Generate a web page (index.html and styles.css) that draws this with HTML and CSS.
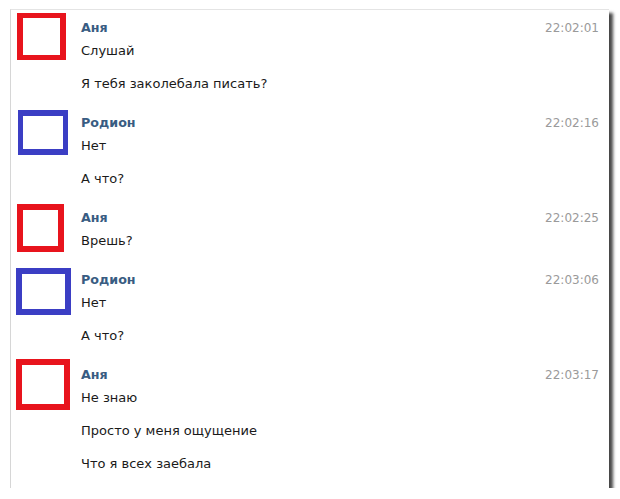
FILE: index.html
```html
<!DOCTYPE html>
<html lang="ru">
<head>
<meta charset="utf-8">
<title>Диалог</title>
<link rel="stylesheet" href="styles.css">
</head>
<body>
<div class="dialog">
  <div class="msg">
    <div class="ava red a1"></div>
    <div class="body">
      <div class="head"><span class="name">Аня</span><span class="time">22:02:01</span></div>
      <div class="text">Слушай</div>
      <div class="text">Я тебя заколебала писать?</div>
    </div>
  </div>
  <div class="msg">
    <div class="ava blue a2"></div>
    <div class="body">
      <div class="head"><span class="name">Родион</span><span class="time">22:02:16</span></div>
      <div class="text">Нет</div>
      <div class="text">А что?</div>
    </div>
  </div>
  <div class="msg">
    <div class="ava red a3"></div>
    <div class="body">
      <div class="head"><span class="name">Аня</span><span class="time">22:02:25</span></div>
      <div class="text">Врешь?</div>
    </div>
  </div>
  <div class="msg">
    <div class="ava blue a4"></div>
    <div class="body">
      <div class="head"><span class="name">Родион</span><span class="time">22:03:06</span></div>
      <div class="text">Нет</div>
      <div class="text">А что?</div>
    </div>
  </div>
  <div class="msg">
    <div class="ava red a5"></div>
    <div class="body">
      <div class="head"><span class="name">Аня</span><span class="time">22:03:17</span></div>
      <div class="text">Не знаю</div>
      <div class="text">Просто у меня ощущение</div>
      <div class="text">Что я всех заебала</div>
    </div>
  </div>
</div>
</body>
</html>
```
FILE: styles.css
```css
html, body {
  margin: 0;
  padding: 0;
  background: #ffffff;
}

body {
  font-family: "DejaVu Sans", "Liberation Sans", sans-serif;
  font-size: 13px;
  color: #1a1a1a;
}

.dialog {
  box-sizing: border-box;
  width: 599px;
  margin: 9px 0 0 10px;
  padding-bottom: 3px;
  background: #fff;
  border-top: 1px solid #e4e4e4;
  border-left: 1px solid #d6d6d6;
  box-shadow: 4px 4px 3px rgba(40, 40, 40, 0.85);
}

.msg {
  display: flex;
  align-items: flex-start;
}

.ava {
  box-sizing: border-box;
  flex: none;
  background: #fff;
  border: 6px solid;
}

.red { border-color: #e8141d; }
.blue { border-color: #3b3ec4; }

.a1 { width: 49px; height: 47px; margin: 3px 0 0 6px; border-width: 5px 6px; }
.a2 { width: 50px; height: 45px; margin: 5px 0 0 7px; border-width: 6px 5px; }
.a3 { width: 47px; height: 48px; margin: 4px 0 0 6px; border-width: 6px; }
.a4 { width: 55px; height: 47px; margin: 6px 0 0 5px; border-width: 6px; }
.a5 { width: 54px; height: 51px; margin: 2px 0 0 5px; border-width: 6px; }

.body {
  flex: 1;
  padding: 8px 10px 11px 0;
}

.a1 + .body { margin-left: 15px; }
.a2 + .body { margin-left: 13px; }
.a3 + .body { margin-left: 17px; }
.a4 + .body { margin-left: 10px; }
.a5 + .body { margin-left: 11px; }

.head {
  display: flex;
  justify-content: space-between;
  align-items: center;
  height: 20px;
  line-height: 20px;
}

.name {
  font-size: 12.7px;
  font-weight: bold;
  color: #395c82;
}

.time {
  font-size: 12px;
  color: #9a9a9a;
}

.text {
  height: 20px;
  line-height: 20px;
  margin-top: 13px;
}

.head + .text {
  margin-top: 3px;
}
```
